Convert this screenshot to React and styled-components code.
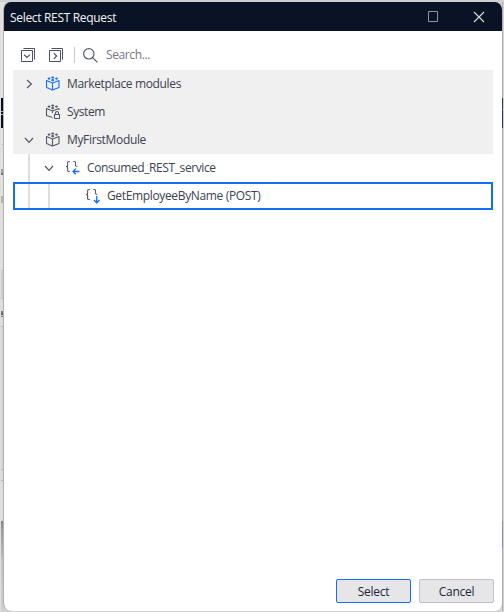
import React from "react";
import styled, { createGlobalStyle } from "styled-components";

const Global = createGlobalStyle`
  * { box-sizing: border-box; }
  html, body { margin: 0; height: 100%; overflow: hidden; }
  body { font-family: "Open Sans", "Noto Sans", sans-serif; font-size: 12px; color: #3b4251; }
  #root { height: 100%; }
  svg { display: block; flex: none; }
`;

const Desktop = styled.div`
  width: 504px;
  height: 612px;
  padding: 2px 1px 1px 3px;
  overflow: hidden;
  background:
    linear-gradient(#d0d0d0, #d0d0d0) 0 0 / 504px 2px no-repeat,
    linear-gradient(#d0d0d0, #d0d0d0) 0 611px / 504px 1px no-repeat,
    linear-gradient(#dedede, #dedede) 0 0 / 1px 612px no-repeat,
    linear-gradient(#d2d2d2, #d2d2d2) 503px 0 / 1px 612px no-repeat,
    linear-gradient(#b0b0b0 0 98px, #30364a 98px 109px, #777 109px 110px, #30364a 110px 128px, #b0b0b0 128px 521px, #92929a 521px 548px, #aaa 548px) 502px 0 / 1px 612px no-repeat,
    linear-gradient(#e2e2e2 0 98px, #050f20 98px 111px, #a5a9b0 111px 112px, #050f20 112px 114px, #c5c5c5 114px 115px, #050f20 115px 128px, #e3e2e1 128px 144px, #c9c9c9 144px 145px, #e3e2e1 145px 169px, #a2a4a8 169px 173px, #73767c 173px 175px, #e3e2e1 175px 196px, #b4b4b4 196px 203px, #dfdfdf 203px 270px, #c4c4c4 270px 271px, #cfcfcf 271px 298px, #bcbcbc 298px 299px, #dedede 299px 311px, #7b848b 311px 313px, #59636b 313px 315px, #c8cbcd 315px 316px, #7b848b 316px 317px, #dedede 317px 326px, #bbb 326px 327px, #d5d5d5 327px 469px, #b7b7b7 469px 470px, #d9d9d9 470px 480px, #bcbcbc 480px 481px, #dddddd 481px 521px, #858585 521px, #9c9c9c 529px, #bababa 557px, #c4c4c4 558px, #d0d0d0 612px) 1px 0 / 3px 612px no-repeat,
    #d4d4d4;
`;

const Dialog = styled.main`
  display: flex;
  flex-direction: column;
  width: 500px;
  height: 609px;
  border-left: 1px solid #b1b0af;
  border-right: 1px solid transparent;
  border-radius: 8px;
  background: #fff;
  background-clip: padding-box;
  overflow: hidden;
`;

const TitleBar = styled.header`
  display: flex;
  align-items: center;
  flex: 0 0 29px;
  padding: 0 17px 0 6px;
  background: #0a1325;
  color: #f2f3f5;
`;

const Title = styled.h1`
  flex: 1;
  margin: 0;
  padding-top: 3px;
  font-size: 12px;
  font-weight: 400;
  line-height: 16px;
  letter-spacing: -0.32px;
`;

const WindowControls = styled.div`
  display: flex;
  gap: 35px;
`;

const Toolbar = styled.div`
  display: flex;
  align-items: center;
  flex: 0 0 39px;
  padding: 9px 9px 0 17px;
`;

const ToolButton = styled.button`
  display: grid;
  width: 15px;
  height: 15px;
  margin-right: 13px;
  padding: 0;
  border: 0;
  background: none;
`;

const Divider = styled.span`
  width: 1px;
  height: 16px;
  margin: 0 8px 0 -3px;
  background: #c9cbd0;
`;

const SearchHint = styled.span`
  margin-left: 8px;
  color: #74777e;
  line-height: 16px;
  letter-spacing: -0.38px;
`;

const Tree = styled.div`
  flex: 1;
  margin: 0 9px;
`;

const Row = styled.div`
  position: relative;
  display: flex;
  align-items: center;
  height: 28px;
  padding-left: ${(p) => p.$level * 20 + 10}px;
  background: ${(p) => (p.$module ? "#f0f0f0" : "#fff")};
  outline: ${(p) => (p.$selected ? "2px solid #146ff4" : "none")};
  outline-offset: -2px;
`;

const Guide = styled.i`
  position: absolute;
  top: ${(p) => (p.$selected ? 2 : 0)}px;
  bottom: ${(p) => (p.$selected ? 2 : 0)}px;
  left: ${(p) => p.$level * 20 + 15}px;
  width: 2px;
  background: #dedede;
`;

const ChevronSlot = styled.span`
  width: 22px;
`;

const Label = styled.span`
  margin-left: 6px;
  line-height: 16px;
  white-space: nowrap;
  letter-spacing: ${(p) => p.$tracking}px;
`;

const Footer = styled.footer`
  display: flex;
  justify-content: flex-end;
  gap: 8px;
  padding: 0 8px 8px 0;
`;

const Button = styled.button`
  width: 75px;
  height: 24px;
  padding: 2px 0 0;
  border: 1px solid ${(p) => (p.$primary ? "#146ff4" : "#bfc0c7")};
  border-radius: 2px;
  background: #e6e6e9;
  color: #202638;
  font: inherit;
  line-height: 16px;
  letter-spacing: -0.25px;
`;

const INK = "#555a67";
const BLUE = "#146ff4";

const Maximize = () => (
  <svg width="10" height="11" fill="none" stroke="#8b95a1"><path d="M.5.5h9v10h-9z" /></svg>
);

const Close = () => (
  <svg width="12" height="12" fill="none" stroke="#d6d8dc" strokeWidth="1.15"><path d="M1 1l10 10M11 1L1 11" /></svg>
);

const StackIcon = ({ expand }) => (
  <svg width="15" height="15" fill="none" stroke="#4b5160">
    <path d="M.5 2.5h11v11H.5zM2.5.5h11v11" />
    <path d={expand ? "M3.2 6.8L6 9.4l2.8-2.6" : "M4.8 5.2l2.8 2.8-2.8 2.8"} strokeWidth="1.2" />
  </svg>
);

const SearchIcon = () => (
  <svg width="15" height="15" fill="none" stroke="#535967" strokeWidth="1.2">
    <circle cx="5.8" cy="5.8" r="5.2" /><path d="M9.6 9.6l4.8 4.8" />
  </svg>
);

const Chevron = ({ open }) => (
  <svg width="12" height="12" fill="none" stroke={INK} strokeWidth="1.25">
    <path d={open ? "M2 4l4 4.4L10 4" : "M4 2l4.4 4L4 10"} />
  </svg>
);

const ModuleIcon = ({ color = INK, locked }) => (
  <svg width="16" height="16" fill="none" stroke={color} strokeWidth="1.1" strokeLinejoin="round">
    <path d={locked ? "M7.5 13.6L1.5 11.5V4.6l6 2.3L14 4.6V6M7.5 6.9v2" : "M1.5 4.6l6 2.3 6.5-2.3v6.9l-6.5 2.4-6-2.4zM7.5 6.9v7"} />
    <g fill={color} stroke="none">
      <ellipse cx="7.7" cy="1.6" rx="1.5" ry="1.1" />
      <ellipse cx="4" cy="2.6" rx="1.4" ry="1.1" />
      <ellipse cx="11.5" cy="2.6" rx="1.4" ry="1.1" />
      <ellipse cx="7.7" cy="4.2" rx="1.5" ry="1.1" />
    </g>
    {locked && <path d="M9.5 10.5h5v4h-5zM10.5 10.5V9a1.5 1.5 0 013 0v1.5" />}
  </svg>
);

const ServiceIcon = ({ down }) => (
  <svg width="16" height="16" fill="none" stroke={INK} strokeWidth="1.1">
    <path d="M4.8 1.5h-1q-1.2 0-1.2 1v3q0 1-1.6 1 1.6 0 1.6 1v3q0 1 1.2 1h1M8.3 1.5h1.1q1.1 0 1.1 1v2.8q0 1.2 1.8 1.2" />
    <path stroke={BLUE} strokeWidth="1.3" d={down ? "M11.7 8v6.7M8.9 12l2.8 2.8 2.8-2.8" : "M8 11.5h6.5M10.8 8.7L8 11.5l2.8 2.8"} />
  </svg>
);

const rows = [
  { text: "Marketplace modules", level: 0, module: true, open: false, icon: <ModuleIcon color={BLUE} />, tracking: -0.36 },
  { text: "System", level: 0, module: true, icon: <ModuleIcon locked />, tracking: -0.42 },
  { text: "MyFirstModule", level: 0, module: true, open: true, icon: <ModuleIcon />, tracking: -0.34 },
  { text: "Consumed_REST_service", level: 1, open: true, icon: <ServiceIcon />, tracking: -0.4 },
  { text: "GetEmployeeByName (POST)", level: 2, selected: true, icon: <ServiceIcon down />, tracking: -0.35 },
];

const TreeRow = ({ row }) => (
  <Row $level={row.level} $module={row.module} $selected={row.selected}>
    {Array.from({ length: row.level }, (_, i) => (
      <Guide key={i} $level={i} $selected={row.selected} />
    ))}
    <ChevronSlot>{row.open !== undefined && <Chevron open={row.open} />}</ChevronSlot>
    {row.icon}
    <Label $tracking={row.tracking}>{row.text}</Label>
  </Row>
);

export default function App() {
  return (
    <>
      <Global />
      <Desktop>
        <Dialog>
          <TitleBar>
            <Title>Select REST Request</Title>
            <WindowControls><Maximize /><Close /></WindowControls>
          </TitleBar>
          <Toolbar>
            <ToolButton aria-label="Expand all"><StackIcon expand /></ToolButton>
            <ToolButton aria-label="Collapse all"><StackIcon /></ToolButton>
            <Divider />
            <SearchIcon />
            <SearchHint>Search...</SearchHint>
          </Toolbar>
          <Tree>{rows.map((row) => <TreeRow key={row.text} row={row} />)}</Tree>
          <Footer>
            <Button $primary>Select</Button>
            <Button>Cancel</Button>
          </Footer>
        </Dialog>
      </Desktop>
    </>
  );
}
